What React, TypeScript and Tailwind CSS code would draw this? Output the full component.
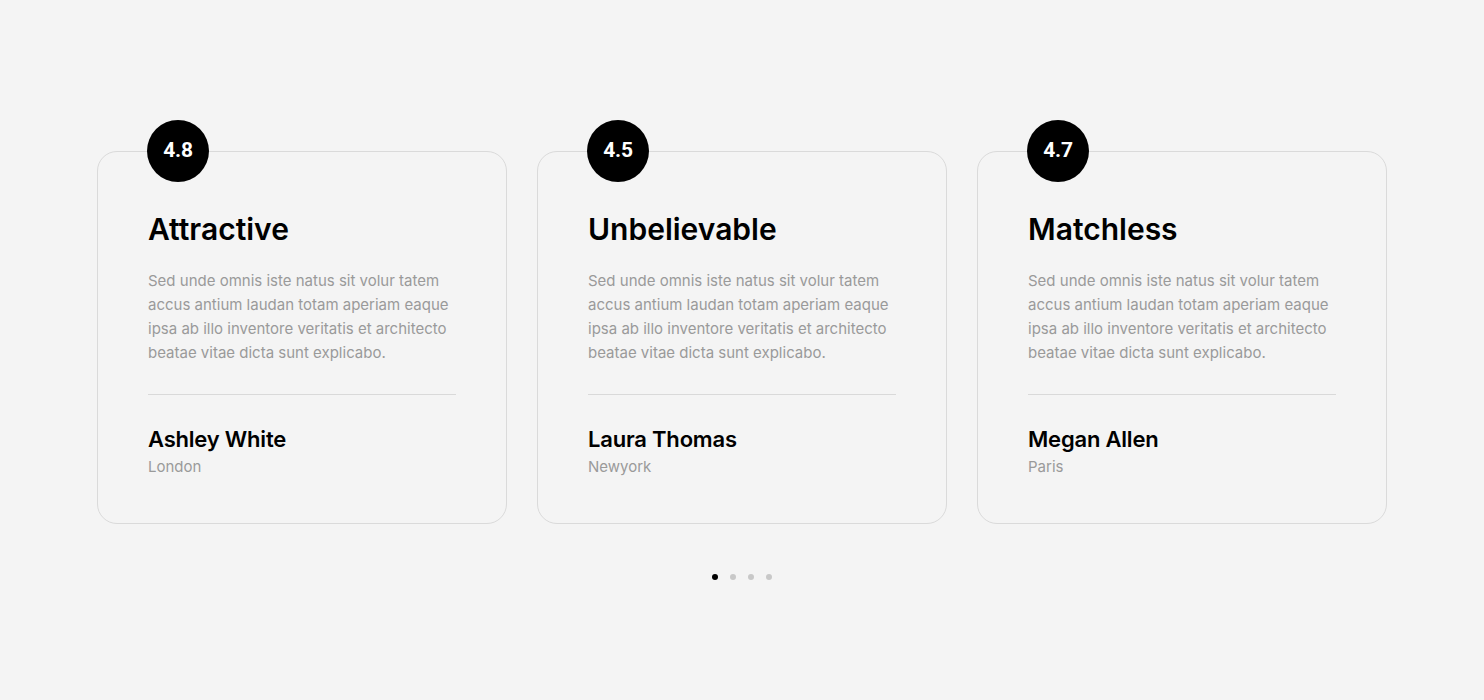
const reviews = [
  { rating: "4.8", title: "Attractive", name: "Ashley White", city: "London" },
  { rating: "4.5", title: "Unbelievable", name: "Laura Thomas", city: "Newyork" },
  { rating: "4.7", title: "Matchless", name: "Megan Allen", city: "Paris" },
];

const App = () => {
  return (
    <div className="min-h-[700px] w-full bg-[#f4f4f4] pt-[151px] font-['Inter',sans-serif]">
      <div className="flex justify-center gap-[30px]">
        {reviews.map((r) => (
          <div
            key={r.name}
            className="relative w-[410px] rounded-[20px] border border-[#dadada] px-[50px] pt-[59px] pb-[45px]"
          >
            {/* rating badge */}
            <div className="absolute left-[49px] top-[-32px] flex h-[62px] w-[62px] items-center justify-center rounded-full bg-black">
              <span className="font-['Roboto',sans-serif] text-[21px] font-bold tracking-[-0.3px] text-white">
                {r.rating}
              </span>
            </div>
            <h3 className="text-[30px] leading-[36px] font-semibold text-black">{r.title}</h3>
            <p className="mt-[22px] text-[15px] leading-[24px] text-[#9a9a9a]">
              Sed unde omnis iste natus sit volur tatem accus antium laudan totam aperiam eaque ipsa ab
              illo inventore veritatis et architecto beatae vitae dicta sunt explicabo.
            </p>
            <div className="mt-[29px] h-px bg-[#d9d9d9]" />
            <div className="mt-[30px] text-[22px] leading-[28px] font-semibold tracking-[-0.2px] text-black">
              {r.name}
            </div>
            <div className="mt-[3px] text-[15px] leading-[22px] text-[#9a9a9a]">{r.city}</div>
          </div>
        ))}
      </div>
      <div className="mt-[50px] flex justify-center gap-[12px]">
        <span className="h-[6px] w-[6px] rounded-full bg-black" />
        <span className="h-[6px] w-[6px] rounded-full bg-[#c8c8c8]" />
        <span className="h-[6px] w-[6px] rounded-full bg-[#c8c8c8]" />
        <span className="h-[6px] w-[6px] rounded-full bg-[#c8c8c8]" />
      </div>
    </div>
  );
};

export default App;
